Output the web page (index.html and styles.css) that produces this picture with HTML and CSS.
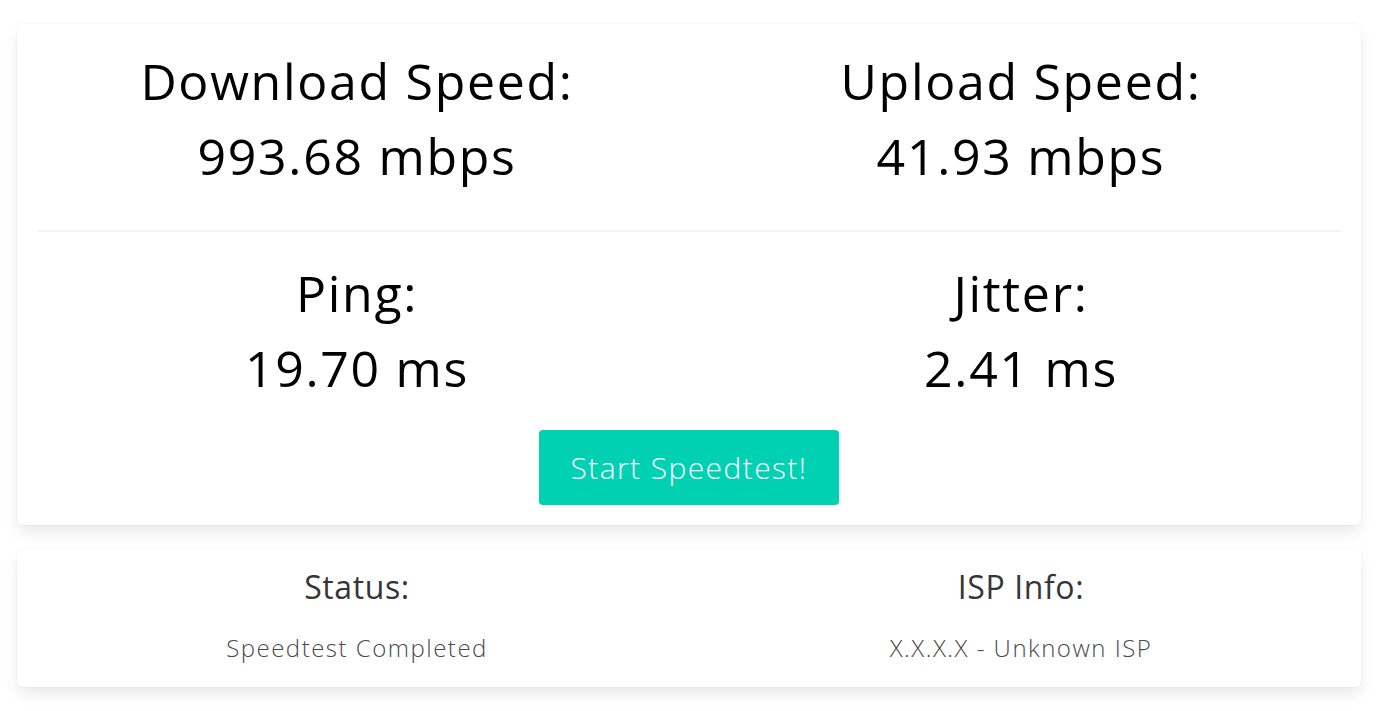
FILE: index.html
```html
<!DOCTYPE html>
<html>
<head>
<meta charset="utf-8">
<link rel="stylesheet" href="styles.css">
</head>
<body>
<div class="page">
  <div class="box">
    <div class="columns">
      <div class="column">
        <p class="big">Download Speed:</p>
        <p class="big">993.68 mbps</p>
      </div>
      <div class="column">
        <p class="big">Upload Speed:</p>
        <p class="big">41.93 mbps</p>
      </div>
    </div>
    <hr class="sep">
    <div class="columns">
      <div class="column">
        <p class="big">Ping:</p>
        <p class="big">19.70 ms</p>
      </div>
      <div class="column">
        <p class="big">Jitter:</p>
        <p class="big">2.41 ms</p>
      </div>
    </div>
    <div class="actions">
      <button class="btn">Start Speedtest!</button>
    </div>
  </div>
  <div class="box">
    <div class="columns last">
      <div class="column">
        <p class="title">Status:</p>
        <p class="subtitle">Speedtest Completed</p>
      </div>
      <div class="column">
        <p class="title">ISP Info:</p>
        <p class="subtitle">X.X.X.X - Unknown ISP</p>
      </div>
    </div>
  </div>
</div>
</body>
</html>
```
FILE: styles.css
```css
* { box-sizing: border-box; }
html, body { margin: 0; padding: 0; background: #fff; }
body {
  font-family: "Open Sans", "Liberation Sans", sans-serif;
  color: #000;
}
.page {
  padding: 24px 24px 0 17px;
}
.box {
  background: #fff;
  border-radius: 6px;
  padding: 20px;
  box-shadow: 0 8px 16px -2px rgba(10,10,10,0.1), 0 0 0 1px rgba(10,10,10,0.02);
  margin-bottom: 24px;
}
.columns {
  display: flex;
  margin: -12px -12px 12px -12px;
}
.columns.last { margin-bottom: -12px; }
.column {
  flex: 1 1 0;
  padding: 12px;
  text-align: center;
}
p { margin: 0; }
.big {
  font-size: 50px;
  line-height: 75px;
  font-weight: 400;
  color: #000;
  letter-spacing: 1.7px;
}
.sep {
  border: 0;
  height: 2px;
  background: #f5f5f5;
  margin: 24px 0;
}
.actions {
  display: flex;
  justify-content: center;
}
.btn {
  font-family: "Open Sans", "Liberation Sans", sans-serif;
  font-weight: 300;
  font-size: 30px;
  height: 75px;
  padding: 0 31px;
  background: #00d1b2;
  color: #fff;
  border: 1px solid transparent;
  border-radius: 4px;
  letter-spacing: 1.4px;
}
.title {
  font-size: 32px;
  line-height: 36px;
  color: #363636;
  font-weight: 400;
  margin-bottom: 24px;
  letter-spacing: 0.6px;
}
.subtitle {
  font-size: 24px;
  line-height: 38px;
  color: #4a4a4a;
  font-weight: 300;
  letter-spacing: 1.5px;
}
```
